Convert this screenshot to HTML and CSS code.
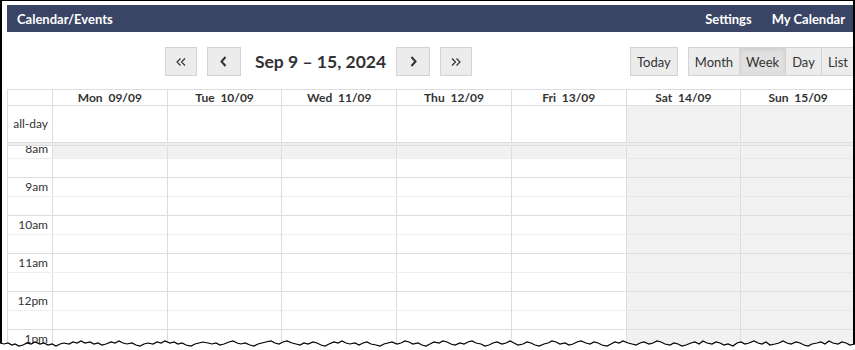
FILE: index.html
```html
<!DOCTYPE html>
<html lang="en">
<head>
  <meta charset="UTF-8">
  <meta name="viewport" content="width=device-width, initial-scale=1.0">
  <title>Calendar/Events</title>
  <link rel="stylesheet" href="styles.css">
</head>
<body>
  <div class="app">
    <header class="topbar">
      <span class="brand">Calendar/Events</span>
      <nav>
        <a href="#settings">Settings</a>
        <a href="#mycal">My Calendar</a>
      </nav>
    </header>

    <div class="toolbar">
      <div class="chunk"></div>
      <div class="chunk">
        <button class="btn btn-dbl" title="Previous year">
          <svg width="10" height="8" viewBox="0 0 10 8"><path d="M4.5 0.5 1 4 4.5 7.5M9 0.5 5.5 4 9 7.5" fill="none" stroke="#333" stroke-width="1.2"/></svg>
        </button>
        <button class="btn btn-sgl" title="Previous week">
          <svg width="7" height="11" viewBox="0 0 7 11"><path d="M5.5 1 1.5 5.5 5.5 10" fill="none" stroke="#333" stroke-width="2"/></svg>
        </button>
        <h2 class="title">Sep 9 – 15, 2024</h2>
        <button class="btn btn-sgl" title="Next week">
          <svg width="7" height="11" viewBox="0 0 7 11"><path d="M1.5 1 5.5 5.5 1.5 10" fill="none" stroke="#333" stroke-width="2"/></svg>
        </button>
        <button class="btn btn-dbl" title="Next year">
          <svg width="10" height="8" viewBox="0 0 10 8"><path d="M1 0.5 4.5 4 1 7.5M5.5 0.5 9 4 5.5 7.5" fill="none" stroke="#333" stroke-width="1.2"/></svg>
        </button>
      </div>
      <div class="chunk">
        <button class="btn">Today</button>
        <div class="group">
          <button class="btn">Month</button>
          <button class="btn active">Week</button>
          <button class="btn">Day</button>
          <button class="btn">List</button>
        </div>
      </div>
    </div>

    <div class="cal">
      <div class="cal-row cal-head">
        <div class="axis"></div>
        <div class="day">Mon  09/09</div>
        <div class="day">Tue  10/09</div>
        <div class="day">Wed  11/09</div>
        <div class="day">Thu  12/09</div>
        <div class="day">Fri  13/09</div>
        <div class="day">Sat  14/09</div>
        <div class="day">Sun  15/09</div>
      </div>
      <div class="cal-row cal-allday">
        <div class="axis">all-day</div>
        <div class="day"></div>
        <div class="day"></div>
        <div class="day"></div>
        <div class="day"></div>
        <div class="day"></div>
        <div class="day weekend"></div>
        <div class="day weekend"></div>
      </div>
      <div class="divider"></div>

      <div class="scroller">
        <div class="grid">
          <div class="cols">
            <div class="axis"></div>
            <div class="col"><div class="offhours"></div></div>
            <div class="col"><div class="offhours"></div></div>
            <div class="col"><div class="offhours"></div></div>
            <div class="col"><div class="offhours"></div></div>
            <div class="col"><div class="offhours"></div></div>
            <div class="col weekend"></div>
            <div class="col weekend"></div>
          </div>
          <div class="slots">
            <div class="slot"><span class="label">8am</span></div>
            <div class="slot half"></div>
            <div class="slot"><span class="label">9am</span></div>
            <div class="slot half"></div>
            <div class="slot"><span class="label">10am</span></div>
            <div class="slot half"></div>
            <div class="slot"><span class="label">11am</span></div>
            <div class="slot half"></div>
            <div class="slot"><span class="label">12pm</span></div>
            <div class="slot half"></div>
            <div class="slot"><span class="label">1pm</span></div>
            <div class="slot half"></div>
          </div>
        </div>
      </div>
    </div>
  </div>

  <div class="frame"></div>
  <svg class="tear" width="855" height="12" viewBox="0 0 855 12">
    <path class="tear-fill" d="M0 12 L0 5 L4 6 L8 5 L12 7 L15 6 L19 8 L23 7 L27 5 L31 6 L35 4 L40 6 L44 5 L48 7 L52 6 L56 8 L60 6 L64 5 L69 6 L73 4 L77 5 L81 3 L85 5 L90 4 L94 6 L98 5 L102 7 L106 6 L111 4 L115 5 L119 3 L123 5 L127 6 L132 5 L136 7 L140 8 L144 6 L148 5 L153 6 L157 4 L161 5 L165 3 L170 5 L174 4 L178 6 L182 5 L186 7 L191 8 L195 6 L199 5 L203 4 L208 5 L212 6 L216 5 L220 7 L224 6 L229 4 L233 3 L237 5 L241 6 L245 5 L250 7 L254 8 L258 6 L262 5 L266 4 L271 3 L275 5 L279 6 L283 4 L287 3 L292 5 L296 6 L300 7 L304 5 L308 6 L313 4 L317 5 L321 7 L325 8 L329 6 L334 4 L338 5 L342 3 L346 5 L350 6 L355 5 L359 7 L363 5 L367 4 L371 6 L376 7 L380 8 L384 6 L388 5 L392 4 L397 6 L401 5 L405 3 L409 4 L413 6 L418 5 L422 7 L426 8 L430 6 L434 4 L439 5 L443 3 L447 4 L451 6 L455 7 L460 5 L464 6 L468 4 L472 3 L476 5 L481 6 L485 8 L489 7 L493 5 L497 4 L502 6 L506 5 L510 3 L514 5 L518 7 L523 6 L527 4 L531 5 L535 7 L539 8 L544 6 L548 5 L552 3 L556 4 L560 6 L565 5 L569 7 L573 6 L577 4 L581 3 L586 5 L590 6 L594 4 L598 5 L602 7 L607 8 L611 6 L615 4 L619 5 L623 3 L628 5 L632 6 L636 7 L640 5 L644 4 L649 6 L653 5 L657 3 L661 4 L665 6 L670 7 L674 5 L678 6 L682 8 L686 7 L691 5 L695 4 L699 6 L703 3 L707 5 L712 6 L716 4 L720 5 L724 7 L728 6 L733 8 L737 5 L741 4 L745 6 L749 5 L754 3 L758 5 L762 6 L766 4 L770 7 L775 6 L779 5 L783 3 L787 5 L791 6 L796 4 L800 5 L804 7 L808 8 L812 6 L817 5 L821 4 L825 6 L829 3 L833 5 L838 6 L842 4 L846 5 L850 7 L855 6 L855 12 Z"/>
    <polyline class="tear-line" points="0,5 4,6 8,5 12,7 15,6 19,8 23,7 27,5 31,6 35,4 40,6 44,5 48,7 52,6 56,8 60,6 64,5 69,6 73,4 77,5 81,3 85,5 90,4 94,6 98,5 102,7 106,6 111,4 115,5 119,3 123,5 127,6 132,5 136,7 140,8 144,6 148,5 153,6 157,4 161,5 165,3 170,5 174,4 178,6 182,5 186,7 191,8 195,6 199,5 203,4 208,5 212,6 216,5 220,7 224,6 229,4 233,3 237,5 241,6 245,5 250,7 254,8 258,6 262,5 266,4 271,3 275,5 279,6 283,4 287,3 292,5 296,6 300,7 304,5 308,6 313,4 317,5 321,7 325,8 329,6 334,4 338,5 342,3 346,5 350,6 355,5 359,7 363,5 367,4 371,6 376,7 380,8 384,6 388,5 392,4 397,6 401,5 405,3 409,4 413,6 418,5 422,7 426,8 430,6 434,4 439,5 443,3 447,4 451,6 455,7 460,5 464,6 468,4 472,3 476,5 481,6 485,8 489,7 493,5 497,4 502,6 506,5 510,3 514,5 518,7 523,6 527,4 531,5 535,7 539,8 544,6 548,5 552,3 556,4 560,6 565,5 569,7 573,6 577,4 581,3 586,5 590,6 594,4 598,5 602,7 607,8 611,6 615,4 619,5 623,3 628,5 632,6 636,7 640,5 644,4 649,6 653,5 657,3 661,4 665,6 670,7 674,5 678,6 682,8 686,7 691,5 695,4 699,6 703,3 707,5 712,6 716,4 720,5 724,7 728,6 733,8 737,5 741,4 745,6 749,5 754,3 758,5 762,6 766,4 770,7 775,6 779,5 783,3 787,5 791,6 796,4 800,5 804,7 808,8 812,6 817,5 821,4 825,6 829,3 833,5 838,6 842,4 846,5 850,7 855,6"/>
  </svg>
</body>
</html>
```

FILE: styles.css
```css
body {
  margin: 0;
  height: 350px;
  overflow: hidden;
  position: relative;
  background: #fff;
  color: #333;
  font-family: Lato, "Noto Sans", sans-serif;
}
.app {
  margin: 5px 0 0 7px;
}

/* top bar */
.topbar {
  display: flex;
  justify-content: space-between;
  align-items: center;
  height: 27px;
  padding: 0 10px;
  background: #3a4465;
  color: #fff;
  font-size: 13px;
  font-weight: bold;
}
.topbar nav {
  display: flex;
  gap: 20px;
}
.topbar a {
  color: #fff;
  text-decoration: none;
}

/* toolbar */
.toolbar {
  display: flex;
  justify-content: space-between;
  align-items: center;
  margin: 15px 0 13px;
}
.chunk {
  display: flex;
  align-items: center;
  gap: 10px;
}
.btn {
  display: inline-flex;
  align-items: center;
  justify-content: center;
  height: 29px;
  padding: 0 6px;
  border: 1px solid #d3d3d3;
  border-radius: 0;
  background: #ececec;
  color: #333;
  font-family: Lato, "Noto Sans", sans-serif;
  font-size: 13px;
}
.btn-dbl {
  width: 32px;
}
.btn-sgl {
  width: 34px;
}
.title {
  margin: 0 0 0 4px;
  font-size: 17.5px;
  font-weight: bold;
  color: #333;
}
.group {
  display: flex;
}
.group .btn + .btn {
  margin-left: -1px;
}
.btn.active {
  background: #e0e0e0;
  box-shadow: inset 0 2px 4px rgba(0, 0, 0, 0.08);
}

/* calendar */
.cal {
  border-top: 1px solid #ddd;
  border-left: 1px solid #ddd;
}
.cal-row,
.cols {
  display: grid;
  grid-template-columns: 44px repeat(7, 1fr);
}
.day,
.col {
  border-left: 1px solid #ddd;
}
.cal-head {
  height: 15px;
  border-bottom: 1px solid #ddd;
}
.cal-head .day {
  font-size: 12px;
  font-weight: bold;
  line-height: 15px;
  text-align: center;
  white-space: pre;
}
.cal-allday {
  height: 36px;
  border-bottom: 1px solid #ddd;
}
.axis {
  padding-right: 4px;
  font-size: 12px;
  text-align: right;
}
.cal-allday .axis {
  line-height: 36px;
}
.weekend {
  background: #f1f1f1;
}
.divider {
  height: 2px;
  background: #eee;
  border-bottom: 1px solid #ddd;
}
.scroller {
  height: 210px;
  overflow: hidden;
}
.grid {
  position: relative;
  margin-top: -7px;
}
.cols {
  position: absolute;
  top: 0;
  left: 0;
  right: 0;
  bottom: 0;
}
.offhours {
  height: 19px;
  background: #f1f1f1;
}
.slots {
  position: relative;
}
.slot {
  box-sizing: border-box;
  height: 19px;
  border-top: 1px solid #ddd;
}
.slot.half {
  border-top: 1px dotted #e0e0e0;
}
.label {
  display: block;
  width: 44px;
  box-sizing: border-box;
  padding-right: 4px;
  font-size: 12px;
  line-height: 18px;
  text-align: right;
}

/* screenshot frame */
.frame {
  position: absolute;
  top: 0;
  left: 0;
  right: 0;
  bottom: 0;
  border-top: 1px solid #000;
  border-left: 2px solid #000;
  border-right: 2px solid #000;
  pointer-events: none;
}
.tear {
  position: absolute;
  left: 0;
  bottom: 0;
}
.tear-fill {
  fill: #fff;
}
.tear-line {
  fill: none;
  stroke: #000;
  stroke-width: 1.2;
}
```
